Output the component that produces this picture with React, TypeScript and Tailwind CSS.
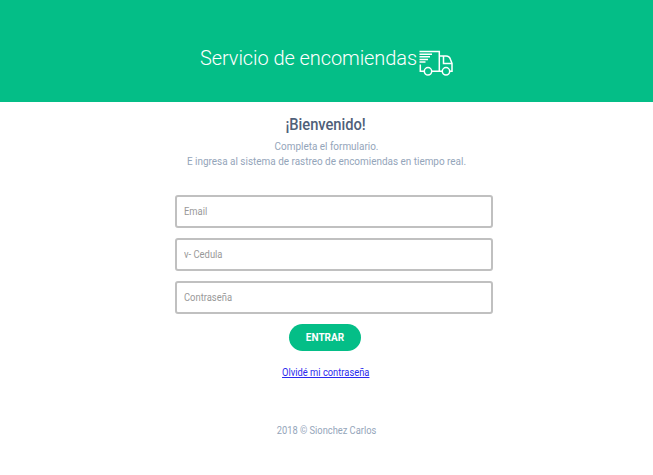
export default function App() {
  const fields = [
    { type: 'email', placeholder: 'Email' },
    { type: 'text', placeholder: 'v- Cedula' },
    { type: 'password', placeholder: 'Contraseña' },
  ];
  return (
    <div className="flex h-[475px] w-[653px] flex-col overflow-hidden bg-white font-[Roboto,sans-serif] text-[#94a5ba]">
      <header className="flex h-[102px] items-center justify-center bg-[#04be87] pt-[14px] text-white">
        <h1 className="text-[20px] leading-[30px] font-light tracking-[-0.08px] whitespace-nowrap">Servicio de encomiendas</h1>
        <svg className="mt-[10px] ml-[2px] h-[26px] w-[34px]" viewBox="0 0 34 26" fill="none" stroke="currentColor" strokeWidth="1.5">
          <path d="M0.500 1.500H20.300V21.300H13M0.500 4.200H13M0.500 6.800H11M0.500 9.400H9M0.500 12H6.500M1.300 14.500V21.300H5M20.300 6H27Q30.500 6 31.500 9.500L33 13.500V21.300H31M20.300 21.300H23M24.500 6V13.500H33" />
          <circle cx="9" cy="21.300" r="3.700" />
          <circle cx="27" cy="21.300" r="3.700" />
        </svg>
      </header>
      <main className="flex flex-col items-center">
        <h2 className="mt-[11px] mr-px scale-x-[0.92] text-[16px] leading-[24px] font-medium tracking-[-0.05px] text-[#4f6079]">¡Bienvenido!</h2>
        <p className="mt-[2px] scale-x-[0.946] text-center text-[10.5px] leading-[15px] whitespace-nowrap">
          Completa el formulario.
          <br />E ingresa al sistema de rastreo de encomiendas en tiempo real.
        </p>
        <form className="mt-[26px] ml-[15px] flex w-[318px] flex-col gap-[10px]">
          {fields.map((f) => (
            <label key={f.placeholder} className="block h-[33px] overflow-hidden rounded-[3px] border-2 border-[#c0c0c0] pl-[7px]">
              <input type={f.type} placeholder={f.placeholder} className="block h-[29px] w-full origin-left scale-x-[0.94] text-[10px] outline-none placeholder:text-[#999999]" />
            </label>
          ))}
        </form>
        <button className="mt-[10px] mr-[3px] h-[27px] w-[72px] rounded-full bg-[#04be87] text-[10px] font-bold text-white">ENTRAR</button>
        <a href="#" className="mt-[13px] mr-px scale-x-[0.935] text-[10px] leading-[17px] text-[#2a2aee] underline">Olvidé mi contraseña</a>
      </main>
      <footer className="mt-[42px] scale-x-[0.93] text-center text-[10px] leading-[16px]">2018 © Sionchez Carlos</footer>
    </div>
  );
}
